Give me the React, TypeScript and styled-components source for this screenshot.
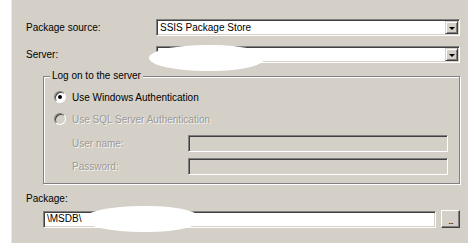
import * as React from "react";
import styled, { createGlobalStyle } from "styled-components";

const GlobalStyle = createGlobalStyle`
  html, body {
    margin: 0;
    padding: 0;
    background: #d4d0c8;
  }
  body {
    font-family: "Liberation Sans", Arial, sans-serif;
    font-size: 10px;
    color: #000000;
  }
`;

const Window = styled.div`
  display: flex;
  width: 468px;
  height: 243px;
  overflow: hidden;
`;

const Strip = styled.div`
  width: 11px;
  background: #ffffff;
  border-right: 1px solid #ebe9e4;
`;

const Panel = styled.div`
  flex: 1;
  display: flex;
  flex-direction: column;
  background: #d4d0c8;
  padding: 19px 8px 0 14px;
`;

const Row = styled.div<{ $top?: number }>`
  display: flex;
  align-items: center;
  margin-top: ${(p) => p.$top || 0}px;
`;

const PackageRow = styled.div`
  display: flex;
  align-items: center;
  margin: 5px 0 0 17px;
`;

const Label = styled.div<{ $width?: number; $disabled?: boolean }>`
  width: ${(p) => (p.$width ? `${p.$width}px` : "auto")};
  flex-shrink: 0;
  line-height: 12px;
  color: ${(p) => (p.$disabled ? "#9c9a95" : "#000000")};
  text-shadow: ${(p) => (p.$disabled ? "1px 1px 0 #f4f3f0" : "none")};
`;

const Sunken = styled.div<{ $disabled?: boolean }>`
  position: relative;
  flex: 1;
  height: 17px;
  box-sizing: border-box;
  display: flex;
  align-items: center;
  background: ${(p) => (p.$disabled ? "#d4d0c8" : "#ffffff")};
  border-top: 1px solid #808080;
  border-left: 1px solid #808080;
  border-right: 1px solid #ffffff;
  border-bottom: 1px solid #ffffff;
  box-shadow: inset 1px 1px 0 #404040, inset -1px -1px 0 #d4d0c8;
  padding-left: 3px;
  line-height: 12px;
`;

const Value = styled.span`
  flex: 1;
  white-space: nowrap;
`;

const DropButton = styled.div`
  width: 13px;
  height: 13px;
  margin-right: 1px;
  box-sizing: border-box;
  background: #d4d0c8;
  border-top: 1px solid #d4d0c8;
  border-left: 1px solid #d4d0c8;
  border-right: 1px solid #404040;
  border-bottom: 1px solid #404040;
  box-shadow: inset 1px 1px 0 #ffffff, inset -1px -1px 0 #808080;
  display: flex;
  align-items: center;
  justify-content: center;
`;

const Arrow = styled.span`
  width: 0;
  height: 0;
  border-left: 3px solid transparent;
  border-right: 3px solid transparent;
  border-top: 3px solid #000000;
  margin-top: 1px;
`;

const Blob = styled.span<{ $left: number; $top: number; $w: number; $h: number }>`
  position: absolute;
  left: ${(p) => p.$left}px;
  top: ${(p) => p.$top}px;
  width: ${(p) => p.$w}px;
  height: ${(p) => p.$h}px;
  background: #ffffff;
  border-radius: 50% 45% 45% 50% / 50%;
  filter: blur(0.6px);
`;

const Group = styled.fieldset`
  margin: 7px 0 0 17px;
  padding: 8px 11px 8px 10px;
  min-inline-size: 0;
  border: 1px solid #808080;
  box-shadow: 1px 1px 0 #ffffff, inset 1px 1px 0 #ffffff;
  display: flex;
  flex-direction: column;
`;

const Legend = styled.legend`
  margin-left: -4px;
  padding: 0 2px;
  line-height: 12px;
  background: #d4d0c8;
`;

const RadioRow = styled.div<{ $top?: number; $disabled?: boolean }>`
  display: flex;
  align-items: center;
  gap: 6px;
  height: 14px;
  margin-top: ${(p) => p.$top || 0}px;
  color: ${(p) => (p.$disabled ? "#9c9a95" : "#000000")};
  text-shadow: ${(p) => (p.$disabled ? "1px 1px 0 #f4f3f0" : "none")};
`;

const RadioCircle = styled.span<{ $checked?: boolean; $disabled?: boolean }>`
  width: 12px;
  height: 12px;
  box-sizing: border-box;
  border-radius: 50%;
  background: ${(p) => (p.$disabled ? "#d4d0c8" : "#ffffff")};
  border: 1px solid;
  border-color: #808080 #ffffff #ffffff #808080;
  box-shadow: inset 1px 1px 0 #404040;
  display: flex;
  align-items: center;
  justify-content: center;
  &::after {
    content: "";
    width: 4px;
    height: 4px;
    border-radius: 50%;
    background: #000000;
    display: ${(p) => (p.$checked ? "block" : "none")};
  }
`;

const FieldRow = styled.div<{ $top: number }>`
  display: flex;
  align-items: center;
  margin-top: ${(p) => p.$top}px;
  padding-left: 18px;
`;

const SmallButton = styled.div`
  width: 19px;
  height: 18px;
  margin-left: 5px;
  box-sizing: border-box;
  background: #d4d0c8;
  border-top: 1px solid #ffffff;
  border-left: 1px solid #ffffff;
  border-right: 1px solid #404040;
  border-bottom: 1px solid #404040;
  box-shadow: inset -1px -1px 0 #808080;
  display: flex;
  align-items: flex-end;
  justify-content: center;
  font-size: 9px;
  line-height: 12px;
  letter-spacing: -1px;
`;

const PackageLabel = styled.div`
  margin-top: 9px;
  line-height: 12px;
`;

const App = () => {
  return (
    <>
      <GlobalStyle />
      <Window>
        <Strip />
        <Panel>
          <Row>
            <Label $width={130}>Package source:</Label>
            <Sunken>
              <Value>SSIS Package Store</Value>
              <DropButton>
                <Arrow />
              </DropButton>
            </Sunken>
          </Row>
          <Row $top={10}>
            <Label $width={130}>Server:</Label>
            <Sunken>
              <Value />
              <DropButton>
                <Arrow />
              </DropButton>
              <Blob $left={-8} $top={-2} $w={116} $h={26} />
            </Sunken>
          </Row>
          <Group>
            <Legend>Log on to the server</Legend>
            <RadioRow>
              <RadioCircle $checked />
              <span>Use Windows Authentication</span>
            </RadioRow>
            <RadioRow $top={8} $disabled>
              <RadioCircle $disabled />
              <span>Use SQL Server Authentication</span>
            </RadioRow>
            <FieldRow $top={9}>
              <Label $width={116} $disabled>
                User name:
              </Label>
              <Sunken $disabled />
            </FieldRow>
            <FieldRow $top={6}>
              <Label $width={116} $disabled>
                Password:
              </Label>
              <Sunken $disabled />
            </FieldRow>
          </Group>
          <PackageLabel>Package:</PackageLabel>
          <PackageRow>
            <Sunken>
              <Value>\MSDB\</Value>
              <Blob $left={40} $top={-6} $w={117} $h={26} />
            </Sunken>
            <SmallButton>...</SmallButton>
          </PackageRow>
        </Panel>
      </Window>
    </>
  );
};

export default App;
